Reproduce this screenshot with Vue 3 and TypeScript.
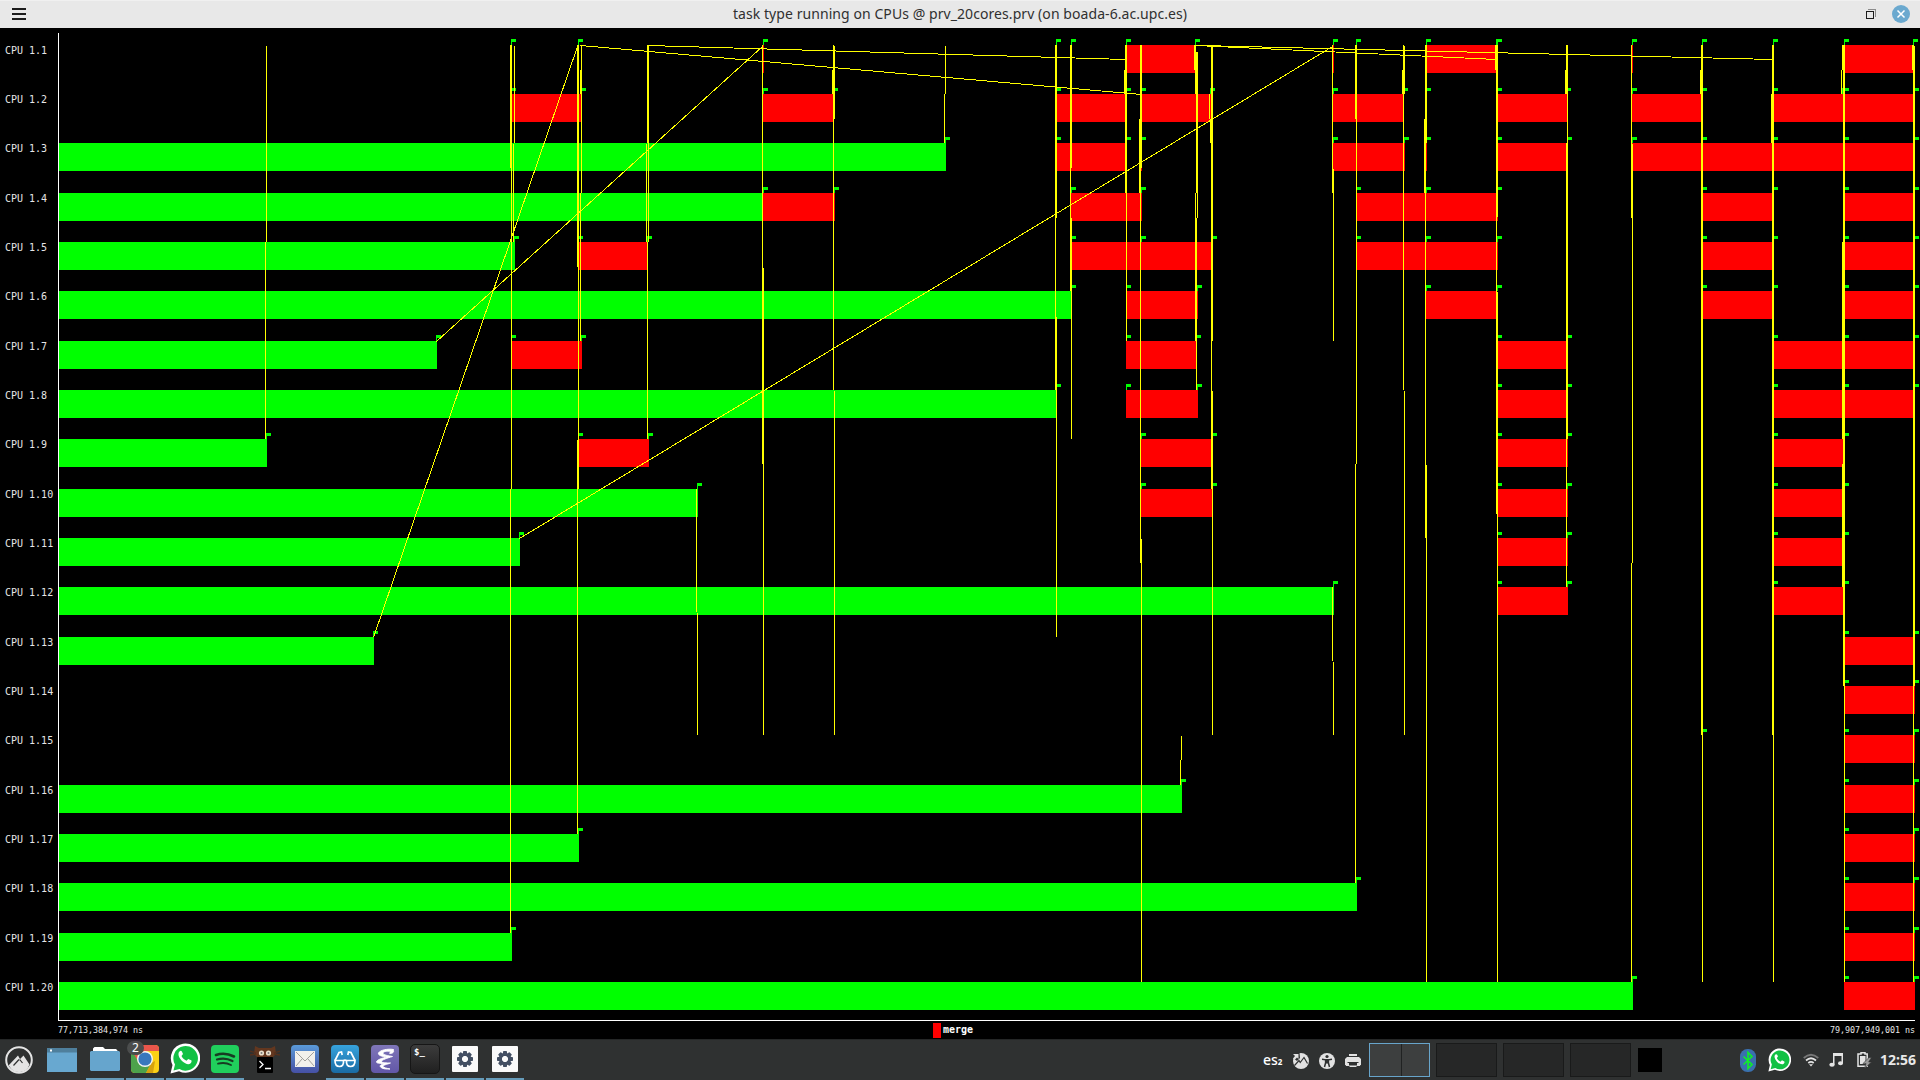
<script setup lang="ts">
type Span = [number, number]
type Flow = [number, number, number]

const cpus = Array.from({ length: 20 }, (_, i) => i + 1)
const rowTop = (cpu: number) => Math.floor(45 + (cpu - 1) * 49.3334 + (cpu === 6 || cpu === 12 ? -0.1 : 0))

// End of the initial task on every CPU that runs one
const initial: Span[] = [
  [3, 946], [4, 763], [5, 515], [6, 1072], [7, 437], [8, 1057], [9, 267], [10, 698], [11, 520],
  [12, 1334], [13, 374], [16, 1182], [17, 579], [18, 1357], [19, 512], [20, 1633],
]

const lateTail: Span[] = [[1844, 1914]]
const merges: Record<number, Span[]> = {
  1: [[578, 579], [763, 764], [1126, 1196], [1333, 1334], [1426, 1497], [1632, 1633], [1844, 1914]],
  2: [[511, 581], [763, 833], [1056, 1126], [1141, 1211], [1333, 1404], [1497, 1567], [1632, 1702], [1773, 1914]],
  3: [[1056, 1126], [1141, 1142], [1333, 1405], [1426, 1427], [1497, 1567], [1632, 1914]],
  4: [[763, 835], [1071, 1142], [1356, 1498], [1702, 1773], [1844, 1914]],
  5: [[579, 648], [1071, 1212], [1356, 1498], [1702, 1773], [1844, 1914]],
  6: [[1126, 1198], [1426, 1497], [1702, 1773], [1844, 1914]],
  7: [[511, 582], [1126, 1197], [1497, 1567], [1773, 1914]],
  8: [[1126, 1198], [1497, 1567], [1773, 1914]],
  9: [[578, 649], [1141, 1212], [1497, 1568], [1773, 1844]],
  10: [[1141, 1212], [1497, 1568], [1773, 1844]],
  11: [[1497, 1568], [1773, 1844]],
  12: [[1497, 1568], [1773, 1843]],
  13: lateTail, 14: [[1844, 1915]], 15: [[1844, 1915]], 16: [[1844, 1915]], 17: [[1844, 1915]],
  18: [[1844, 1915]], 19: [[1844, 1915]], 20: [[1844, 1915]],
}

const flags: Record<number, number[]> = {
  1: [511, 578, 763, 1056, 1071, 1126, 1195, 1333, 1356, 1426, 1496, 1497, 1632, 1702, 1773, 1844, 1913],
  2: [511, 581, 763, 833, 1056, 1126, 1141, 1210, 1333, 1403, 1426, 1497, 1566, 1632, 1702, 1773, 1842, 1844, 1914],
  3: [945, 1056, 1126, 1141, 1333, 1404, 1426, 1497, 1567, 1632, 1702, 1773, 1844, 1914],
  4: [763, 834, 1071, 1141, 1356, 1426, 1497, 1702, 1773, 1844, 1914],
  5: [514, 578, 647, 1071, 1141, 1212, 1356, 1426, 1497, 1702, 1773, 1844, 1914],
  6: [1071, 1126, 1197, 1426, 1497, 1702, 1773, 1844, 1914],
  7: [436, 511, 581, 1126, 1196, 1497, 1567, 1773, 1844, 1914],
  8: [1056, 1126, 1197, 1497, 1567, 1773, 1844, 1914],
  9: [266, 578, 648, 1141, 1212, 1497, 1567, 1773, 1844],
  10: [697, 1141, 1212, 1497, 1567, 1773, 1844],
  11: [519, 1497, 1567, 1773, 1844],
  12: [1333, 1497, 1567, 1773, 1844],
  13: [373, 1844, 1914],
  14: [1844, 1914],
  15: [1702, 1844, 1914],
  16: [1181, 1844, 1914],
  17: [578, 1844, 1914],
  18: [1356, 1844, 1914],
  19: [511, 1844, 1914],
  20: [1632, 1844, 1914],
}

// Vertical communication lines: x, top, bottom
const flows: Flow[] = [
  [266, 46, 242], [265, 242, 439],
  [510, 45, 168], [511, 45, 489], [510, 489, 933], [514, 46, 143], [513, 144, 242],
  [577, 45, 267], [578, 45, 489], [577, 440, 834], [580, 70, 94], [581, 46, 193], [580, 193, 341],
  [647, 45, 143], [648, 45, 242], [646, 144, 242], [647, 242, 439],
  [762, 45, 464], [763, 268, 735],
  [833, 45, 390], [834, 46, 119], [832, 70, 94], [834, 391, 735],
  [945, 46, 94], [944, 94, 143], [696, 489, 612], [697, 613, 735],
  [1055, 45, 390], [1056, 45, 218], [1056, 317, 637],
  [1070, 45, 291], [1071, 45, 168], [1071, 218, 439],
  [1125, 45, 193], [1126, 45, 341], [1124, 70, 94],
  [1140, 45, 563], [1141, 45, 168], [1139, 119, 193], [1141, 539, 982],
  [1181, 736, 760], [1180, 760, 785],
  [1194, 45, 70], [1195, 45, 94], [1196, 52, 193], [1197, 52, 218], [1195, 193, 341], [1196, 218, 390],
  [1211, 45, 489], [1212, 45, 341], [1210, 119, 143], [1209, 94, 119], [1212, 391, 735],
  [1332, 45, 193], [1333, 169, 341], [1332, 587, 661], [1333, 662, 735],
  [1355, 45, 119], [1356, 45, 464], [1355, 464, 883],
  [1403, 45, 390], [1404, 46, 94], [1402, 70, 94], [1404, 391, 735],
  [1425, 45, 538], [1426, 45, 143], [1424, 119, 193], [1426, 465, 982],
  [1495, 45, 70], [1496, 45, 514], [1497, 45, 217], [1497, 292, 982],
  [1566, 45, 94], [1565, 70, 94], [1567, 45, 439], [1566, 143, 587],
  [1631, 45, 218], [1632, 144, 563], [1631, 563, 982],
  [1701, 45, 735], [1702, 45, 982], [1700, 70, 94],
  [1772, 45, 735], [1773, 45, 982], [1771, 94, 143],
  [1842, 45, 70], [1841, 70, 94], [1842, 242, 439], [1842, 464, 587], [1843, 45, 686], [1844, 45, 982],
  [1912, 45, 70], [1913, 45, 982], [1914, 46, 686],
]

const diagonals: [number, number, number, number][] = [
  [373, 637, 577, 46], [436, 341, 762, 46], [519, 538, 1332, 46],
  [580, 45, 1141, 94], [647, 45, 1126, 59], [1195, 45, 1496, 59], [1200, 45, 1773, 59],
]

const workspaces = [true, false, false, false]
const teeth = [0, 45, 90, 135, 180, 225, 270, 315]
</script>

<template>
  <div class="screen">
    <header class="titlebar">
      <div class="burger"><i></i><i></i><i></i></div>
      <h1>task type running on CPUs @ prv_20cores.prv (on boada-6.ac.upc.es)</h1>
      <div class="controls">
        <svg width="10" height="10" viewBox="0 0 10 10" shape-rendering="crispEdges" fill="none">
          <path d="M2 .5H9.5V8" stroke="#8c8c8c" /><rect x=".5" y="2.5" width="7" height="7" stroke="#1c1c1c" />
        </svg>
        <svg width="18" height="18" viewBox="0 0 18 18">
          <circle cx="9" cy="9" r="9" fill="#6ba9cf" />
          <path d="M5.5 5.5l7 7m0-7l-7 7" stroke="#fff" stroke-width="1.5" />
        </svg>
      </div>
    </header>

    <main class="timeline">
      <div class="labels">
        <span v-for="cpu in cpus" :key="cpu" :style="{ height: rowTop(cpu + 1) - rowTop(cpu) + 'px' }">CPU 1.{{ cpu }}</span>
      </div>
      <svg class="plot" width="1862" height="993" viewBox="58 28 1862 993" shape-rendering="crispEdges">
        <rect v-for="[cpu, end] in initial" :key="'i' + cpu" x="59" :y="rowTop(cpu)" :width="end - 59" height="28" fill="#0f0" />
        <g v-for="(spans, cpu) in merges" :key="'m' + cpu" fill="#f00">
          <rect v-for="s in spans" :key="s[0]" :x="s[0]" :y="rowTop(Number(cpu))" :width="s[1] - s[0]" height="28" />
        </g>
        <g v-for="(xs, cpu) in flags" :key="'f' + cpu" fill="#0f0">
          <path v-for="x in xs" :key="x" :d="`M${x} ${rowTop(Number(cpu)) - 6}h5v3h-4v3h-1z`" />
        </g>
        <rect v-for="([x, a, b], i) in flows" :key="'v' + i" :x="x" :y="a" width="1" :height="b - a" fill="#ff0" />
        <line v-for="([x1, y1, x2, y2], i) in diagonals" :key="'d' + i" :x1="x1 + 0.5" :y1="y1 + 0.5" :x2="x2 + 0.5" :y2="y2 + 0.5" stroke="#ff0" />
        <path d="M58.5 33V1020.5H1915" fill="none" stroke="#fff" />
      </svg>
    </main>
    <div class="scale">
      <span class="time">77,713,384,974 ns</span>
      <span class="legend"><i></i>merge</span>
      <span class="time end">79,907,949,001 ns</span>
    </div>

    <footer class="panel">
      <div class="cell menu">
        <svg width="28" height="28" viewBox="0 0 28 28">
          <circle cx="14" cy="14" r="12.8" fill="none" stroke="#e4e4e4" stroke-width="2" />
          <path d="M3.500 19.500L13 9.500 15 13 18.500 9.500 24.500 18.500A11 11 0 0 1 4.500 20.500Z" fill="#e4e4e4" />
          <path d="M8.500 19.500l5.500-6M17.500 17l-2.800-3.500" stroke="#2f3131" stroke-width="1.200" />
        </svg>
      </div>
      <div class="cell desk">
        <svg width="30" height="24" viewBox="0 0 30 24">
          <rect width="30" height="24" fill="#68a8d0" /><rect width="30" height="4.500" fill="#4f7f9c" />
          <rect x="3" y="1.500" width="2" height="2" fill="#fff" />
        </svg>
      </div>
      <div class="cell open">
        <svg width="30" height="24" viewBox="0 0 30 24">
          <path d="M3 5V1.500L4.500 0H13l2 2h11l1.500 1.500V5z" fill="#fff" />
          <path d="M0 5l1-1h28l1 1v18l-1 1H1l-1-1z" fill="#66a5cd" />
        </svg>
      </div>
      <div class="cell open chrome">
        <svg width="28" height="28" viewBox="0 0 28 28">
          <defs><clipPath id="tile"><rect width="28" height="28" rx="4" /></clipPath></defs>
          <g clip-path="url(#tile)">
            <rect width="28" height="28" fill="#fcd116" /><path d="M0 0H28V6H14L7 16 0 6z" fill="#e9564b" />
            <path d="M0 4L8 18 20 19 15 28H0z" fill="#4da24b" /><path d="M20 18l-5 10h7l2-12z" fill="#d6a20f" />
          </g>
          <circle cx="14" cy="14" r="8" fill="#f4f4f4" /><circle cx="14" cy="14" r="6.600" fill="#3877bd" />
        </svg>
        <b class="badge">2</b>
      </div>
      <div class="cell open">
        <svg width="30" height="31" viewBox="0 0 30 31">
          <path d="M.5 30.500L2.500 22A14.700 14.700 0 1 1 9 28.300z" fill="#fff" />
          <path d="M3.500 27.500L5 21.500A12.300 12.300 0 1 1 9.500 26z" fill="#12c144" />
          <path d="M9.500 8.500c1-1 2-.8 2.500.3l1 2.200-1.500 2c1 2.200 2.600 3.700 5 4.700l1.700-1.800 3 1.400c.8.500.3 2.500-.8 3.200-2 1.500-5.400.3-8.400-2.500S7.300 10.500 9.500 8.500z" fill="#fff" />
        </svg>
      </div>
      <div class="cell open">
        <svg width="28" height="28" viewBox="0 0 28 28" fill="none" stroke="#173b22" stroke-linecap="round">
          <rect width="28" height="28" rx="4" fill="#20cf5c" stroke="none" />
          <path d="M5 10Q14 7 23 11.500" stroke-width="2.600" /><path d="M6 14.500Q14 12 21.500 16" stroke-width="2.200" />
          <path d="M7 18.700Q14 16.800 20 20" stroke-width="1.800" />
        </svg>
      </div>
      <div class="cell">
        <svg width="30" height="28" viewBox="0 0 30 28">
          <path d="M5 1l4 2h12l4-2 1 8-3 3H7L4 9z" fill="#63371f" />
          <path d="M0 6l6 2M0 10l6-1M30 6l-6 2M30 10l-6-1" stroke="#54301d" stroke-width="1.300" />
          <circle cx="11.500" cy="8" r="2.600" fill="#eadfcb" /><circle cx="18.500" cy="8" r="2.600" fill="#eadfcb" />
          <circle cx="11.500" cy="8" r="1" fill="#777" /><circle cx="18.500" cy="8" r="1" fill="#777" />
          <rect x="7" y="12" width="16" height="16" rx="1" />
          <path d="M9.500 16l3.500 3.500L9.500 23M15 23.500h6" stroke="#fff" stroke-width="1.300" fill="none" />
        </svg>
      </div>
      <div class="cell">
        <svg width="28" height="28" viewBox="0 0 28 28">
          <defs><linearGradient id="mail" x2="0" y2="1"><stop stop-color="#5a9ad8" /><stop offset="1" stop-color="#4650a4" /></linearGradient></defs>
          <rect width="28" height="28" rx="4" fill="url(#mail)" /><rect x="4" y="6" width="20" height="16" fill="#f2f1ec" />
          <path d="M5 7l9 9 9-9M5 21l6-7M23 21l-6-7" stroke="#8a8a86" stroke-width=".8" fill="none" />
        </svg>
      </div>
      <div class="cell open">
        <svg width="28" height="28" viewBox="0 0 28 28">
          <defs><linearGradient id="read" x2="0" y2="1"><stop stop-color="#37a3dd" /><stop offset="1" stop-color="#1a6ba3" /></linearGradient></defs>
          <rect width="28" height="28" rx="4" fill="url(#read)" />
          <g fill="none" stroke="#fff" stroke-width="1.700">
            <path d="M4 15.500h8.500q.5 6-4 6t-4.500-6zM15.500 15.500H24q0 6-4.500 6t-4-6zM12 15.800q2-1.500 4 0" />
            <path d="M4 15.500L8 7.500l2.500-.5.700 3M24 15.500L20 7.500l-2.500-.5-.7 3" />
          </g>
        </svg>
      </div>
      <div class="cell open">
        <svg width="28" height="28" viewBox="0 0 28 28">
          <defs><linearGradient id="swirl" x2="0" y2="1"><stop stop-color="#7f76b8" /><stop offset="1" stop-color="#6257a8" /></linearGradient></defs>
          <rect width="28" height="28" rx="4" fill="url(#swirl)" />
          <path d="M22.500 4.500C17 3.500 9 5 7.500 8c-.8 2.500 4 3.500 8.500 4-5 1-10.500 3-10.500 5 0 1.500 5 1.500 8.500 1.500-4 .8-5.500 2-4.500 3.500 1.500 2 6 2.200 9.500 2-3-.6-6.500-1.400-7-2.500-.4-1.500 4-2 7.500-3.500-4 0-9-.2-9-1.500 0-1.600 6-3.500 11-5-4-.7-9.500-1.500-9.500-3.300 0-1.700 3.500-2.200 7.500-2l-.8 2.300c3 0 5-1.500 3.300-4z" fill="#fff" stroke="#fff" stroke-width=".9" />
        </svg>
      </div>
      <div class="cell open">
        <div class="term">$_</div>
      </div>
      <div v-for="n in 2" :key="n" class="cell open">
        <svg width="26" height="26" viewBox="0 0 26 26">
          <rect width="26" height="26" rx="1" fill="#fafafa" />
          <g transform="translate(13 13)" fill="#434f63">
            <rect v-for="t in teeth" :key="t" x="-2" y="-8" width="4" height="5" rx=".8" :transform="`rotate(${t})`" />
            <circle r="4.800" fill="none" stroke="#434f63" stroke-width="3" />
          </g>
        </svg>
      </div>

      <div class="tray">
        <span class="layout">es<small>2</small></span>
        <svg width="16" height="16" viewBox="0 0 16 16">
          <circle cx="8" cy="8" r="8" fill="#e2e2e2" />
          <path d="M1.500 12.500L6 7.500l1.200 2L11 4.500l3.500 6" stroke="#2f3131" stroke-width="1.200" fill="none" />
          <path d="M0 0h6.500L7 5 4 8 0 5z" fill="#2f3131" /><path d="M0 1h5.500v5L4 4.500 1.500 7 0 5.500 2 3z" fill="#e2e2e2" />
        </svg>
        <svg width="16" height="16" viewBox="0 0 16 16">
          <circle cx="8" cy="8" r="8" fill="#e2e2e2" /><circle cx="8" cy="3.500" r="1.600" fill="#2f3131" />
          <path d="M3 6.200l3.600.6v3L5.500 14M13 6.200l-3.600.6v3l1.100 4.200" stroke="#2f3131" stroke-width="1.500" fill="none" /><path d="M6.300 6h3.400v4.500H6.300z" fill="#2f3131" />
        </svg>
        <svg width="16" height="16" viewBox="0 0 16 16" fill="#e2e2e2">
          <path d="M4 1h8v2H4zM2 4h12l2 2v6h-2.500V9h-11v3H0V6zM4 10.500h8V13l-1 1H5l-1-1z" fill-rule="evenodd" /><path d="M0 10h4v3H1zM12 10h4l-1 3h-3z" /><path d="M4 9.500h8v3H4z" fill="#2f3131" />
        </svg>
      </div>
      <div class="spaces">
        <div v-for="(active, i) in workspaces" :key="i" :class="['space', { active }]"><i v-if="active"></i></div>
      </div>
      <div class="thumb"></div>
      <div class="status">
        <svg width="16" height="23" viewBox="0 0 16 23">
          <rect width="16" height="23" rx="7.500" fill="#3a6fae" />
          <path d="M3.500 7.500l8.500 8-4 4v-16l4 4-8.500 8" fill="none" stroke="#0fef28" stroke-width="1.600" />
        </svg>
        <svg class="wa" width="23" height="24" viewBox="0 0 30 31">
          <path d="M.5 30.500L2.500 22A14.700 14.700 0 1 1 9 28.300z" fill="#fff" />
          <path d="M3.500 27.500L5 21.500A12.300 12.300 0 1 1 9.500 26z" fill="#12c144" />
          <path d="M9.500 8.500c1-1 2-.8 2.500.3l1 2.200-1.500 2c1 2.200 2.600 3.700 5 4.700l1.700-1.800 3 1.400c.8.500.3 2.500-.8 3.200-2 1.500-5.400.3-8.400-2.500S7.300 10.500 9.500 8.500z" fill="#fff" />
        </svg>
        <svg class="wifi" width="16" height="14" viewBox="0 0 16 14" fill="none" stroke-width="1.700">
          <path d="M.7 5Q8-1.500 15.300 5" stroke="#777" /><path d="M3 7.500Q8 3 13 7.500M5.300 10Q8 7.700 10.700 10" stroke="#e4e4e4" />
          <path d="M6 11.200h4L8 13.500z" fill="#e4e4e4" />
        </svg>
        <svg class="music" width="14" height="14" viewBox="0 0 14 14" fill="#e4e4e4">
          <path d="M4 0h10v2H5.500v9.500H4zM12.500 0H14v10h-1.500zM4 0h10v3H4z" /><ellipse cx="3" cy="11.800" rx="2.700" ry="2" /><ellipse cx="11.500" cy="10.300" rx="2.500" ry="2" />
        </svg>
        <svg class="battery" width="15" height="16" viewBox="0 0 15 16">
          <path d="M4 2V.8h4V2h2.200v12.200H1V2z" fill="none" stroke="#e4e4e4" stroke-width="1.500" /><path d="M3 4h5.500v8H3z" fill="#e4e4e4" />
          <path d="M12 5.500L6 11.500h3L7.500 16.500l7-6.500h-2.800L14.500 5.500z" fill="#9a9a9a" stroke="#2f3131" stroke-width=".6" />
        </svg>
        <span class="clock">12:56</span>
      </div>
    </footer>
  </div>
</template>

<style>
body { margin: 0; background: #000; overflow: hidden; }
</style>

<style scoped>
.screen { width: 1920px; height: 1080px; display: flex; flex-direction: column; background: #000; color: #fff; font-family: "Noto Sans", sans-serif; overflow: hidden; }
svg { display: block; flex: none; }
.titlebar { box-sizing: border-box; height: 28px; flex: none; display: flex; align-items: center; justify-content: space-between; background: #e8e8e8; border-top: 1px solid #f0f0f0; padding: 0 10px 1px 12px; }
.burger { width: 44px; display: flex; flex-direction: column; gap: 3px; }
.burger i { width: 14px; height: 2px; background: #1c1c1c; }
h1 { margin: 0 2px 0 0; font-size: 14px; line-height: 20px; font-weight: 400; letter-spacing: .07px; color: #303030; white-space: nowrap; }
.controls { width: 44px; display: flex; align-items: center; justify-content: flex-end; gap: 16px; }
.timeline { height: 993px; flex: none; display: flex; }
.labels { box-sizing: border-box; width: 58px; padding: 17px 0 0 5px; display: flex; flex-direction: column; font: 10px/11px "DejaVu Sans Mono", monospace; color: #e6e6e6; }
.labels span { flex: none; }
.scale { box-sizing: border-box; height: 18px; flex: none; display: flex; justify-content: space-between; padding: 2px 5px 0 58px; }
.time { width: 120px; font: 8.400px/14px "DejaVu Sans Mono", monospace; letter-spacing: -.05px; color: #e6e6e6; }
.end { text-align: right; }
.legend { display: flex; gap: 2px; margin-right: 67px; font: bold 10px/13px "DejaVu Sans Mono", monospace; }
.legend i { width: 8px; height: 15px; background: #f00; }
.panel { box-sizing: border-box; height: 41px; flex: none; display: flex; background: #2f3131; border-top: 1px solid #252727; }
.cell { box-sizing: border-box; width: 38px; height: 40px; flex: none; margin-right: 2px; padding-bottom: 1px; border-bottom: 2px solid transparent; display: flex; align-items: center; justify-content: center; }
.cell.open { border-bottom-color: #669bb9; }
.cell.menu, .cell.desk { margin-right: 5px; }
.cell.menu, .cell.desk { padding-top: 2px; }
.chrome { position: relative; }
.badge { position: absolute; left: 1px; top: 1px; width: 17px; height: 14px; border-radius: 7px; background: #4b4d4d; font: 12px/14px "Noto Sans", sans-serif; text-align: center; }
.term { box-sizing: border-box; width: 30px; height: 30px; border: 1px solid #161616; border-radius: 5px; background: linear-gradient(#3c3c3c, #202020); font: bold 9px/11px "DejaVu Sans Mono", monospace; padding: 2px 0 0 3px; }
.tray { display: flex; align-items: center; gap: 10px; width: 106px; margin-left: 737px; padding-top: 1px; box-sizing: border-box; height: 40px; }
.layout { font-size: 14px; font-weight: 500; width: 20px; white-space: nowrap; line-height: 16px; }
.layout small { font-size: 8px; font-weight: 700; }
.spaces { display: flex; gap: 6px; padding-top: 3px; }
.space { box-sizing: border-box; width: 61px; height: 34px; border: 1px solid #191a1a; background: #262727; }
.space.active { border-color: #68a5cb; background: #3d3f3f; display: flex; }
.space i { width: 1px; margin-left: 31px; background: #202222; }
.thumb { width: 24px; height: 24px; margin: 8px 0 0 7px; background: #000; }
.status { display: flex; align-items: center; height: 40px; margin-left: 78px; box-sizing: border-box; }
.wa { margin-left: 12px; }
.wifi { margin-left: 12px; }
.music { margin-left: 10px; }
.battery { margin-left: 14px; }
.clock { margin-left: 8px; font-size: 14px; font-weight: 700; line-height: 18px; color: #e8e8e8; }
</style>
